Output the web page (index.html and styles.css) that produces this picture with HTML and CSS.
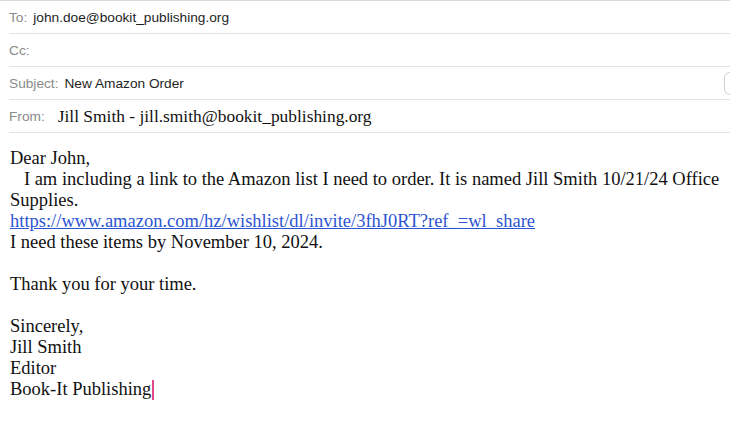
FILE: index.html
```html
<!DOCTYPE html>
<html>
<head>
<meta charset="utf-8">
<link rel="stylesheet" href="styles.css">
</head>
<body>
<div class="compose">
  <div class="headers">
    <div class="row"><span class="label">To:</span><span class="value">john.doe@bookit_publishing.org</span></div>
    <div class="row"><span class="label">Cc:</span></div>
    <div class="row subject"><span class="label">Subject:</span><span class="value">New Amazon Order</span><span class="pill"></span></div>
    <div class="row"><span class="label">From:</span><span class="value from">Jill Smith - jill.smith@bookit_publishing.org</span></div>
  </div>
  <div class="body">
    <div>Dear John,</div>
    <div>&nbsp;&nbsp;&nbsp;I am including a link to the Amazon list I need to order. It is named Jill Smith 10/21/24 Office Supplies.</div>
    <div><a class="link" href="#">https://www.amazon.com/hz/wishlist/dl/invite/3fhJ0RT?ref_=wl_share</a></div>
    <div>I need these items by November 10, 2024.</div>
    <div class="blank"></div>
    <div>Thank you for your time.</div>
    <div class="blank"></div>
    <div>Sincerely,</div>
    <div>Jill Smith</div>
    <div>Editor</div>
    <div>Book-It Publishing<span class="caret"></span></div>
  </div>
</div>
</body>
</html>
```
FILE: styles.css
```css
html, body {
  margin: 0;
  padding: 0;
  background: #ffffff;
}
.compose {
  width: 730px;
  height: 435px;
  overflow: hidden;
  border-top: 1px solid #d9d9d9;
}
.headers {
  padding-left: 9px;
}
.row {
  display: flex;
  align-items: center;
  height: 32px;
  border-bottom: 1px solid #e3e3e3;
  font-family: "Liberation Sans", Arial, sans-serif;
  font-size: 13.7px;
  position: relative;
}
.label {
  color: #8a8a8a;
  margin-right: 6px;
}
.value {
  color: #1e1e1e;
}
.value.from {
  font-family: "Liberation Serif", "Times New Roman", serif;
  font-size: 17.4px;
  margin-left: 7px;
  color: #111;
}
.pill {
  position: absolute;
  right: -14px;
  top: 5px;
  width: 18px;
  height: 21px;
  border: 1px solid #d0d0d0;
  border-radius: 6px;
}
.body {
  padding: 15px 0 0 10px;
  font-family: "Liberation Serif", "Times New Roman", serif;
  font-size: 18.5px;
  line-height: 21px;
  color: #111;
}
.blank {
  height: 21px;
}
.link {
  color: #2d55d2;
  text-decoration: underline;
}
.caret {
  display: inline-block;
  width: 2px;
  height: 20px;
  background: #de4a8a;
  vertical-align: -5px;
  margin-left: 1px;
}
```
